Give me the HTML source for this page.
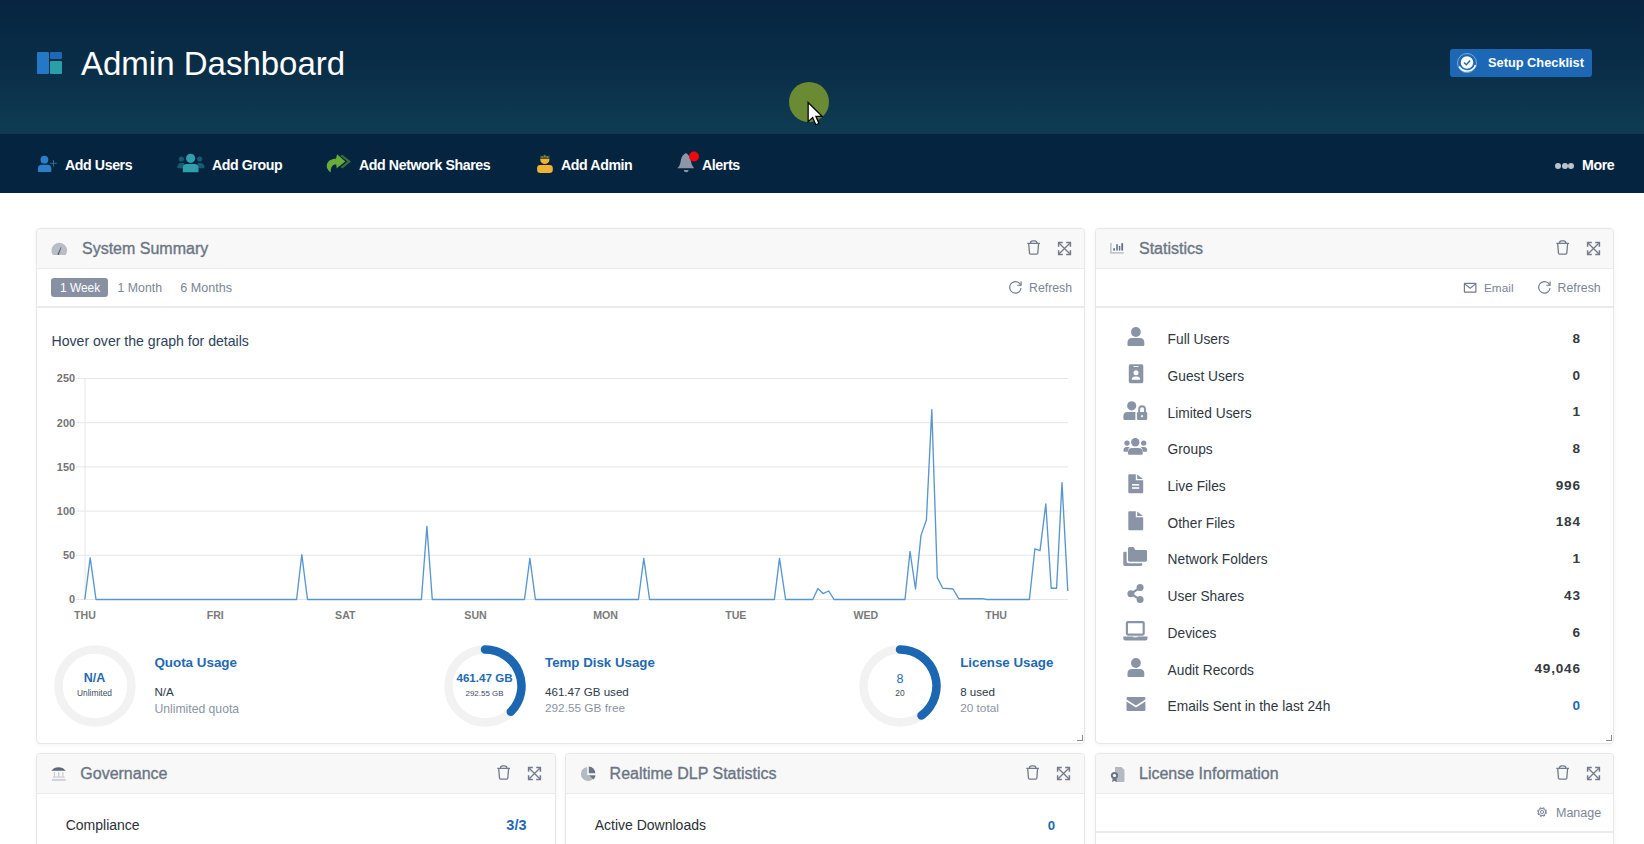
<!DOCTYPE html><html><head><meta charset="utf-8"><style>
*{margin:0;padding:0;box-sizing:border-box}
html,body{width:1644px;height:844px;overflow:hidden;background:#fff;font-family:"Liberation Sans",sans-serif}
.t{position:absolute;line-height:1;white-space:nowrap}
.abs{position:absolute}
.panel{position:absolute;background:#fff;border:1px solid #e6e6e6;border-radius:4px;box-shadow:0 1px 3px rgba(0,0,0,0.06);overflow:hidden}
.ph{position:absolute;left:0;right:0;top:0;height:40px;background:#f8f8f8;border-bottom:1px solid #e9e9e9}
.tb{position:absolute;left:0;right:0;top:40px;height:38px;border-bottom:2px solid #ececec}
</style></head><body>
<div class="abs" style="left:0;top:0;width:1644px;height:134px;background:linear-gradient(180deg,#072540 0%,#0a2e47 50%,#0e3c53 100%)"></div>
<div class="abs" style="left:0;top:134px;width:1644px;height:59px;background:#05243f"></div>
<div class="abs" style="left:37px;top:52px;width:12px;height:22px;background:#2379c6;border-radius:1px"></div>
<div class="abs" style="left:50px;top:52px;width:12px;height:7px;background:#1c69b5;border-radius:1px"></div>
<div class="abs" style="left:50px;top:61px;width:12px;height:13px;background:#2a9fa8;border-radius:1px"></div>
<div class="t" style="left:81px;top:46.97px;font-size:33px;color:#ffffff;font-weight:400;">Admin Dashboard</div>

<div class="abs" style="left:1450px;top:49px;width:142px;height:28px;background:#1d68b4;border-radius:3px"></div>
<svg class="abs" style="left:1456px;top:52px" width="22" height="22" viewBox="0 0 22 22">
<circle cx="11" cy="11" r="9.5" fill="none" stroke="#7fa9d6" stroke-width="1"/>
<path d="M3.2 14.5 A9 9 0 0 0 19.5 13" fill="none" stroke="#fff" stroke-width="1.6"/>
<circle cx="11" cy="10.5" r="6.2" fill="#fff"/>
<path d="M8 10.6 L10.3 12.8 L14.2 8.6" fill="none" stroke="#1d68b4" stroke-width="1.4"/>
</svg>
<div class="t" style="left:1488px;top:57.36px;font-size:12.8px;color:#ffffff;font-weight:700;">Setup Checklist</div>

<div class="abs" style="left:788.5px;top:81.5px;width:40.5px;height:40.5px;border-radius:50%;background:#6a8a33"></div>
<svg class="abs" style="left:806px;top:100.5px" width="20" height="26.5" viewBox="0 0 20 27">
<path d="M2 1.5 L2 21 L6.6 16.8 L9.8 24.2 L13 22.8 L9.9 15.6 L16.2 15.6 Z" fill="#fff" stroke="#000" stroke-width="1.3" stroke-linejoin="miter"/>
</svg>
<svg class="abs" style="left:37px;top:155px" width="21" height="18" viewBox="0 0 21 18">
<circle cx="7.4" cy="4.7" r="3.9" fill="#2a7fc8"/>
<path d="M0.9 13.7 Q0.9 9.7 4.9 9.7 L10.4 9.7 Q14.4 9.7 14.4 13.7 L14.4 16.2 Q14.4 17 13.6 17 L1.7 17 Q0.9 17 0.9 16.2Z" fill="#2a7fc8"/>
<path d="M16.5 5 V11.6 M13.2 8.3 H19.8" stroke="#2a6f95" stroke-width="1"/>
</svg>
<div class="t" style="left:65px;top:157.58px;font-size:14.2px;color:#fff;font-weight:700;letter-spacing:-0.42px;">Add Users</div>

<svg class="abs" style="left:177px;top:153px" width="28" height="20" viewBox="0 0 28 20">
<circle cx="4.4" cy="6" r="2.6" fill="#195a72"/><circle cx="22.7" cy="6" r="2.6" fill="#195a72"/>
<path d="M0.3 14.2 C0.3 11.5 1.8 10 4.6 10 L7.2 10 L7.2 15.3 L1 15.3 Q0.3 15.3 0.3 14.2Z" fill="#195a72"/>
<path d="M27.5 14.2 C27.5 11.5 26 10 23.2 10 L20.6 10 L20.6 15.3 L26.8 15.3 Q27.5 15.3 27.5 14.2Z" fill="#195a72"/>
<circle cx="13.6" cy="5.3" r="4.6" fill="#2f9fab"/>
<path d="M5.8 15 Q5.8 11 9.8 11 L17.5 11 Q21.5 11 21.5 15 L21.5 19.2 L5.8 19.2Z" fill="#2f9fab"/>
</svg>
<div class="t" style="left:212px;top:157.58px;font-size:14.2px;color:#fff;font-weight:700;letter-spacing:-0.42px;">Add Group</div>

<svg class="abs" style="left:325px;top:153px" width="27" height="21" viewBox="0 0 27 21">
<path d="M17 1.4 L26 8.5 L17.4 15.6 L15.6 14 L22.4 8.5 L15.3 3 Z" fill="#3b6a3c"/>
<path d="M12.1 1.2 L20.3 8.5 L11.7 15.3 L11.2 11.4 C7.8 11.2 5.6 13.5 5.7 19.6 C2.6 17.2 1.3 14.6 1.8 12 C2.6 7.6 6 5.8 11 5.7 Z" fill="#6aab3b"/>
</svg>
<div class="t" style="left:359px;top:157.58px;font-size:14.2px;color:#fff;font-weight:700;letter-spacing:-0.42px;">Add Network Shares</div>

<svg class="abs" style="left:536px;top:154px" width="18" height="20" viewBox="0 0 18 20">
<path d="M4.3 4.3 L4.3 1.2 L6.2 2.6 L8.8 0.5 L11.4 2.6 L13.4 1.2 L13.4 4.3Z" fill="#5d5a35"/>
<circle cx="6.2" cy="3" r="0.7" fill="#7fae3a"/><circle cx="8.8" cy="2.3" r="0.7" fill="#7fae3a"/><circle cx="11.4" cy="3" r="0.7" fill="#7fae3a"/>
<path d="M4.3 4.8 H13.4 V5.8 C13.4 8.4 11.4 10 8.85 10 C6.3 10 4.3 8.4 4.3 5.8Z" fill="#f0b232"/>
<rect x="1.1" y="11.1" width="15.7" height="7.8" rx="3.2" fill="#f0b232"/>
</svg>
<div class="t" style="left:561px;top:157.58px;font-size:14.2px;color:#fff;font-weight:700;letter-spacing:-0.42px;">Add Admin</div>

<svg class="abs" style="left:676px;top:151px" width="24" height="23" viewBox="0 0 24 23">
<path d="M9.9 2 C8.6 2.6 7.6 3.6 6.6 4.8 C5.2 6.6 4.9 9.5 4.2 12.5 C3.7 14.6 2.6 16.2 1.3 17.2 L18.2 17.2 C16.6 15.6 15.6 13.2 15 10.5 C14.4 7 12.2 3 9.9 2Z" fill="#8c96a6"/>
<path d="M7.8 18.9 H12.6 A2.4 2.4 0 0 1 7.8 18.9Z" fill="#8c96a6"/>
<circle cx="18" cy="5.5" r="5" fill="#ee0a0a"/>
</svg>
<div class="t" style="left:702px;top:157.58px;font-size:14.2px;color:#fff;font-weight:700;letter-spacing:-0.42px;">Alerts</div>

<div class="abs" style="left:1555px;top:163px;width:6px;height:6px;border-radius:50%;background:#bcc2cc"></div>
<div class="abs" style="left:1561.5px;top:163px;width:6px;height:6px;border-radius:50%;background:#bcc2cc"></div>
<div class="abs" style="left:1568px;top:163px;width:6px;height:6px;border-radius:50%;background:#bcc2cc"></div>
<div class="t" style="left:1582px;top:157.58px;font-size:14.2px;color:#fff;font-weight:700;letter-spacing:-0.42px;">More</div>

<div class="abs" style="left:36px;top:228px;width:1049px;height:516px;border:1px solid #e7e7e7;border-radius:4px;background:#fff;box-shadow:0 1px 4px rgba(0,0,0,0.05);overflow:hidden"><div class="abs" style="left:0;top:0;right:0;height:40px;background:#f8f8f8;border-bottom:1px solid #ebebeb"></div></div>

<div class="abs" style="left:1095px;top:228px;width:519px;height:516px;border:1px solid #e7e7e7;border-radius:4px;background:#fff;box-shadow:0 1px 4px rgba(0,0,0,0.05);overflow:hidden"><div class="abs" style="left:0;top:0;right:0;height:40px;background:#f8f8f8;border-bottom:1px solid #ebebeb"></div></div>

<div class="abs" style="left:36px;top:753px;width:520px;height:147px;border:1px solid #e7e7e7;border-radius:4px;background:#fff;box-shadow:0 1px 4px rgba(0,0,0,0.05);overflow:hidden"><div class="abs" style="left:0;top:0;right:0;height:40px;background:#f8f8f8;border-bottom:1px solid #ebebeb"></div></div>

<div class="abs" style="left:565px;top:753px;width:520px;height:147px;border:1px solid #e7e7e7;border-radius:4px;background:#fff;box-shadow:0 1px 4px rgba(0,0,0,0.05);overflow:hidden"><div class="abs" style="left:0;top:0;right:0;height:40px;background:#f8f8f8;border-bottom:1px solid #ebebeb"></div></div>

<div class="abs" style="left:1095px;top:753px;width:519px;height:147px;border:1px solid #e7e7e7;border-radius:4px;background:#fff;box-shadow:0 1px 4px rgba(0,0,0,0.05);overflow:hidden"><div class="abs" style="left:0;top:0;right:0;height:40px;background:#f8f8f8;border-bottom:1px solid #ebebeb"></div></div>

<div class="abs" style="left:37px;top:306px;width:1047px;height:1.5px;background:#ebebeb"></div>
<div class="abs" style="left:1096px;top:306px;width:517px;height:1.5px;background:#ebebeb"></div>
<div class="abs" style="left:1096px;top:831px;width:517px;height:1.5px;background:#ebebeb"></div>
<svg class="abs" style="left:51px;top:242px" width="17" height="14" viewBox="0 0 17 14">
<path d="M1.9 13 A7.8 7.8 0 1 1 14.6 13 Z" fill="#b9bec6"/>
<path d="M6.4 12.6 L7.7 12.9 L10.4 5.2 L9.9 5 Z" fill="#4b5563"/>
</svg>
<div class="t" style="left:82px;top:240.66px;font-size:16.0px;color:#6b7585;font-weight:400;-webkit-text-stroke:0.35px #6b7585;">System Summary</div>

<svg class="abs" style="left:1027px;top:240px" width="14" height="15" viewBox="0 0 14 15">
<path d="M0.3 3.4 H13 M3.4 3.2 Q3.4 0.9 5.8 0.9 H7.5 Q9.9 0.9 9.9 3.2 M1.7 3.6 L2.5 13.3 Q2.6 14.2 3.5 14.2 H9.8 Q10.7 14.2 10.8 13.3 L11.6 3.6" fill="none" stroke="#727b8a" stroke-width="1.3"/>
</svg>
<svg class="abs" style="left:1057px;top:240.5px" width="15" height="15" viewBox="0 0 15 15">
<path d="M2.2 2.2 L12.8 12.8 M12.8 2.2 L2.2 12.8" stroke="#727b8a" stroke-width="1.3"/>
<path d="M1.6 5.8 V1.6 H5.8 M9.2 1.6 H13.4 V5.8 M13.4 9.2 V13.4 H9.2 M5.8 13.4 H1.6 V9.2" fill="none" stroke="#727b8a" stroke-width="1.5"/>
</svg>
<div class="abs" style="left:51px;top:278px;width:57px;height:19px;background:#8891a4;border-radius:3px"></div>
<div class="t" style="left:60px;top:282.53px;font-size:11.9px;color:#fff;font-weight:400;">1 Week</div>

<div class="t" style="left:117.6px;top:282.39px;font-size:12.3px;color:#7c8594;font-weight:400;">1 Month</div>

<div class="t" style="left:180.3px;top:282.13px;font-size:12.6px;color:#7c8594;font-weight:400;">6 Months</div>

<svg class="abs" style="left:1008.5px;top:281px" width="13.5" height="13" viewBox="3 3 19 18.3">
<path d="M19.933 13.041a8 8 0 1 1 -9.925 -8.788c3.899 -1 7.935 1.007 9.425 4.747" fill="none" stroke="#727b8a" stroke-width="1.7"/>
<path d="M20 3.6v5.4h-5.4" fill="none" stroke="#727b8a" stroke-width="1.7"/>
</svg>
<div class="t" style="left:1029px;top:282.39px;font-size:12.3px;color:#7c8594;font-weight:400;">Refresh</div>

<div class="t" style="left:51.5px;top:333.96px;font-size:14.1px;color:#2d425a;font-weight:400;">Hover over the graph for details</div>

<svg class="abs" style="left:0;top:0" width="1644" height="844"><line x1="76" y1="599.5" x2="1068" y2="599.5" stroke="#e6e6e6" stroke-width="1"/><text x="75" y="603.3" text-anchor="end" font-size="10.9" fill="#747474" font-family="Liberation Sans" font-weight="700">0</text><line x1="76" y1="555.3" x2="1068" y2="555.3" stroke="#e6e6e6" stroke-width="1"/><text x="75" y="559.1" text-anchor="end" font-size="10.9" fill="#747474" font-family="Liberation Sans" font-weight="700">50</text><line x1="76" y1="511.1" x2="1068" y2="511.1" stroke="#e6e6e6" stroke-width="1"/><text x="75" y="514.9" text-anchor="end" font-size="10.9" fill="#747474" font-family="Liberation Sans" font-weight="700">100</text><line x1="76" y1="466.9" x2="1068" y2="466.9" stroke="#e6e6e6" stroke-width="1"/><text x="75" y="470.7" text-anchor="end" font-size="10.9" fill="#747474" font-family="Liberation Sans" font-weight="700">150</text><line x1="76" y1="422.7" x2="1068" y2="422.7" stroke="#e6e6e6" stroke-width="1"/><text x="75" y="426.5" text-anchor="end" font-size="10.9" fill="#747474" font-family="Liberation Sans" font-weight="700">200</text><line x1="76" y1="378.5" x2="1068" y2="378.5" stroke="#e6e6e6" stroke-width="1"/><text x="75" y="382.3" text-anchor="end" font-size="10.9" fill="#747474" font-family="Liberation Sans" font-weight="700">250</text><line x1="85" y1="378" x2="85" y2="600" stroke="#e6e6e6" stroke-width="1"/><text x="85.0" y="619.2" text-anchor="middle" font-size="10.6" fill="#7a7a7a" font-family="Liberation Sans" font-weight="700">THU</text><text x="215.2" y="619.2" text-anchor="middle" font-size="10.6" fill="#7a7a7a" font-family="Liberation Sans" font-weight="700">FRI</text><text x="345.3" y="619.2" text-anchor="middle" font-size="10.6" fill="#7a7a7a" font-family="Liberation Sans" font-weight="700">SAT</text><text x="475.5" y="619.2" text-anchor="middle" font-size="10.6" fill="#7a7a7a" font-family="Liberation Sans" font-weight="700">SUN</text><text x="605.6" y="619.2" text-anchor="middle" font-size="10.6" fill="#7a7a7a" font-family="Liberation Sans" font-weight="700">MON</text><text x="735.8" y="619.2" text-anchor="middle" font-size="10.6" fill="#7a7a7a" font-family="Liberation Sans" font-weight="700">TUE</text><text x="865.9" y="619.2" text-anchor="middle" font-size="10.6" fill="#7a7a7a" font-family="Liberation Sans" font-weight="700">WED</text><text x="996.1" y="619.2" text-anchor="middle" font-size="10.6" fill="#7a7a7a" font-family="Liberation Sans" font-weight="700">THU</text><path d="M84.8 599.5 L90.2 557.8 L96.0 599.5 L296.6 599.5 L301.8 554.6 L307.5 599.5 L421.4 599.5 L426.9 526.4 L432.3 599.5 L524.5 599.5 L529.9 558.4 L535.4 599.5 L638.4 599.5 L643.8 558.4 L649.6 599.5 L774.4 599.5 L779.5 558.4 L785.6 599.5 L812.8 599.5 L817.9 588.5 L823.0 593.6 L828.8 591.0 L834.0 599.5 L905.0 599.5 L910.0 551.4 L915.5 589.0 L921.0 535.4 L926.4 520.0 L931.8 409.6 L937.3 577.6 L942.7 588.2 L953.0 589.0 L958.7 598.7 L982.4 598.7 L987.0 599.5 L1029.4 599.5 L1034.9 548.8 L1040.0 550.7 L1045.8 504.0 L1051.2 588.2 L1056.6 588.2 L1062.0 482.6 L1067.8 591.0" fill="none" stroke="#5896d0" stroke-width="1.35" stroke-linejoin="round"/></svg>
<svg class="abs" style="left:49.5px;top:641px" width="90" height="90" viewBox="0 0 90 90"><circle cx="45" cy="45" r="36.5" fill="none" stroke="#f2f2f2" stroke-width="8.5"/></svg>
<div class="t" style="left:94.5px;transform:translateX(-50%);top:672.42px;font-size:12.5px;color:#1f6ab3;font-weight:700;">N/A</div>

<div class="t" style="left:94.5px;transform:translateX(-50%);top:689.49px;font-size:8.4px;color:#3c4b5d;font-weight:400;">Unlimited</div>

<div class="t" style="left:154.4px;top:656.46px;font-size:13.4px;color:#1f6ab3;font-weight:700;">Quota Usage</div>

<div class="t" style="left:154.4px;top:686.18px;font-size:11.6px;color:#2c3a4b;font-weight:400;">N/A</div>

<div class="t" style="left:154.4px;top:702.67px;font-size:12.2px;color:#8a94a6;font-weight:400;">Unlimited quota</div>

<svg class="abs" style="left:439.5px;top:640.5px" width="90" height="90" viewBox="0 0 90 90"><circle cx="45" cy="45" r="36.5" fill="none" stroke="#f2f2f2" stroke-width="8.5"/><path d="M45 8.5 A36.5 36.5 0 0 1 70.81 70.81" fill="none" stroke="#1c67b2" stroke-width="8.5" stroke-linecap="round"/></svg>
<div class="t" style="left:484.5px;transform:translateX(-50%);top:672.38px;font-size:11.6px;color:#1f6ab3;font-weight:700;">461.47 GB</div>

<div class="t" style="left:484.5px;transform:translateX(-50%);top:690.27px;font-size:7.95px;color:#3c4b5d;font-weight:400;">292.55 GB</div>

<div class="t" style="left:545px;top:655.74px;font-size:13.3px;color:#1f6ab3;font-weight:700;">Temp Disk Usage</div>

<div class="t" style="left:545px;top:685.88px;font-size:11.6px;color:#2c3a4b;font-weight:400;">461.47 GB used</div>

<div class="t" style="left:545px;top:703.31px;font-size:11.8px;color:#8a94a6;font-weight:400;">292.55 GB free</div>

<svg class="abs" style="left:855px;top:640.5px" width="90" height="90" viewBox="0 0 90 90"><circle cx="45" cy="45" r="36.5" fill="none" stroke="#f2f2f2" stroke-width="8.5"/><path d="M45 8.5 A36.5 36.5 0 0 1 66.45 74.53" fill="none" stroke="#1c67b2" stroke-width="8.5" stroke-linecap="round"/></svg>
<div class="t" style="left:900px;transform:translateX(-50%);top:673.12px;font-size:12.5px;color:#1f6ab3;font-weight:400;">8</div>

<div class="t" style="left:900px;transform:translateX(-50%);top:689.49px;font-size:8.4px;color:#3c4b5d;font-weight:400;">20</div>

<div class="t" style="left:960.2px;top:655.74px;font-size:13.3px;color:#1f6ab3;font-weight:700;">License Usage</div>

<div class="t" style="left:960.2px;top:685.88px;font-size:11.6px;color:#2c3a4b;font-weight:400;">8 used</div>

<div class="t" style="left:960.2px;top:703.31px;font-size:11.8px;color:#8a94a6;font-weight:400;">20 total</div>

<div class="abs" style="left:1077px;top:735px;width:6px;height:6px;border-right:1px solid #8a8a8a;border-bottom:1px solid #8a8a8a"></div>
<div class="abs" style="left:1606px;top:735px;width:6px;height:6px;border-right:1px solid #8a8a8a;border-bottom:1px solid #8a8a8a"></div>
<svg class="abs" style="left:1110px;top:243px" width="15" height="12" viewBox="0 0 15 12">
<path d="M0 0 H1.8 V9.1 H13.8 V10.8 H0 Z" fill="#c3c8cf"/>
<rect x="3.3" y="4.9" width="1.7" height="2.9" rx="0.8" fill="#66707f"/><rect x="6.1" y="1.1" width="1.9" height="6.7" rx="0.8" fill="#7c8698"/>
<rect x="8.9" y="2.8" width="1.4" height="5" rx="0.7" fill="#66707f"/><rect x="11.3" y="0" width="1.8" height="7.8" rx="0.8" fill="#66707f"/>
</svg>
<div class="t" style="left:1139px;top:240.66px;font-size:16.0px;color:#6b7585;font-weight:400;-webkit-text-stroke:0.35px #6b7585;">Statistics</div>

<svg class="abs" style="left:1556px;top:240px" width="14" height="15" viewBox="0 0 14 15">
<path d="M0.3 3.4 H13 M3.4 3.2 Q3.4 0.9 5.8 0.9 H7.5 Q9.9 0.9 9.9 3.2 M1.7 3.6 L2.5 13.3 Q2.6 14.2 3.5 14.2 H9.8 Q10.7 14.2 10.8 13.3 L11.6 3.6" fill="none" stroke="#727b8a" stroke-width="1.3"/>
</svg>
<svg class="abs" style="left:1586px;top:240.5px" width="15" height="15" viewBox="0 0 15 15">
<path d="M2.2 2.2 L12.8 12.8 M12.8 2.2 L2.2 12.8" stroke="#727b8a" stroke-width="1.3"/>
<path d="M1.6 5.8 V1.6 H5.8 M9.2 1.6 H13.4 V5.8 M13.4 9.2 V13.4 H9.2 M5.8 13.4 H1.6 V9.2" fill="none" stroke="#727b8a" stroke-width="1.5"/>
</svg>
<svg class="abs" style="left:1463px;top:282px" width="14" height="12" viewBox="0 0 14 12">
<rect x="1.4" y="1.4" width="11.5" height="8.8" rx="0.4" fill="none" stroke="#727b8a" stroke-width="1.2"/>
<path d="M1.6 1.9 L7.15 6.2 L12.7 1.9" fill="none" stroke="#727b8a" stroke-width="1.2"/>
</svg>
<div class="t" style="left:1484px;top:282.81px;font-size:11.8px;color:#7c8594;font-weight:400;">Email</div>

<svg class="abs" style="left:1537.5px;top:281px" width="13.5" height="13" viewBox="3 3 19 18.3">
<path d="M19.933 13.041a8 8 0 1 1 -9.925 -8.788c3.899 -1 7.935 1.007 9.425 4.747" fill="none" stroke="#727b8a" stroke-width="1.7"/>
<path d="M20 3.6v5.4h-5.4" fill="none" stroke="#727b8a" stroke-width="1.7"/>
</svg>
<div class="t" style="left:1557.6px;top:282.39px;font-size:12.3px;color:#7c8594;font-weight:400;">Refresh</div>

<svg class="abs" style="left:1126.5px;top:327px" width="18" height="19" viewBox="0 0 18 19"><circle cx="8.9" cy="5" r="4.9" fill="#8a94a7"/><path d="M0.5 15.4 Q0.5 10.9 5 10.9 L12.8 10.9 Q17.3 10.9 17.3 15.4 L17.3 17.9 Q17.3 19 16.2 19 L1.6 19 Q0.5 19 0.5 17.9Z" fill="#8a94a7"/></svg>
<div class="t" style="left:1167.6px;top:333.26px;font-size:13.75px;color:#2f3742;font-weight:400;">Full Users</div>

<div class="t" style="right:63.200000000000045px;top:331.99px;font-size:13.6px;color:#363a41;font-weight:700;letter-spacing:0.8px;">8</div>

<svg class="abs" style="left:1126.5px;top:364px" width="18" height="20" viewBox="0 0 18 20"><rect x="1.8" y="0.2" width="14.5" height="19" rx="1.8" fill="#8a94a7"/><rect x="6.5" y="2" width="5" height="1" fill="#fff"/><circle cx="9" cy="8.8" r="2.5" fill="#fff"/><path d="M4.8 15.8 C4.8 13 6.5 12.4 9 12.4 C11.5 12.4 13.2 13 13.2 15.8Z" fill="#fff"/></svg>
<div class="t" style="left:1167.6px;top:369.96px;font-size:13.75px;color:#2f3742;font-weight:400;">Guest Users</div>

<div class="t" style="right:63.200000000000045px;top:368.69px;font-size:13.6px;color:#363a41;font-weight:700;letter-spacing:0.8px;">0</div>

<svg class="abs" style="left:1123px;top:401px" width="25" height="20" viewBox="0 0 25 20"><circle cx="8.7" cy="4.8" r="4.6" fill="#8a94a7"/><path d="M0.4 15.2 Q0.4 11 4.6 11 L12.4 11 L12.4 19 L1.6 19 Q0.4 19 0.4 17.8Z" fill="#8a94a7"/><path d="M16.2 11 V8.1 A2.9 2.9 0 0 1 22 8.1 V11" fill="none" stroke="#8a94a7" stroke-width="1.9"/><rect x="13.9" y="11" width="10.3" height="8" rx="1.2" fill="#8a94a7"/><rect x="18.2" y="14.2" width="1.8" height="2" fill="#fff"/></svg>
<div class="t" style="left:1167.6px;top:406.66px;font-size:13.75px;color:#2f3742;font-weight:400;">Limited Users</div>

<div class="t" style="right:63.200000000000045px;top:405.39px;font-size:13.6px;color:#363a41;font-weight:700;letter-spacing:0.8px;">1</div>

<svg class="abs" style="left:1123px;top:437px" width="25" height="18" viewBox="0 0 25 18"><circle cx="12.3" cy="5.3" r="4.2" fill="#8a94a7"/><path d="M5 15 Q5 11.1 9 11.1 L15.7 11.1 Q19.7 11.1 19.7 15 L19.7 16.8 Q19.7 17.8 18.7 17.8 L6 17.8 Q5 17.8 5 16.8Z" fill="#8a94a7"/><circle cx="4" cy="6.1" r="2.7" fill="#8a94a7"/><circle cx="20.7" cy="6.1" r="2.7" fill="#8a94a7"/><path d="M0.4 13.5 Q0.4 9.9 3.5 9.9 L6.6 9.9 Q5 11.5 4.7 14.8 L1.5 14.8 Q0.4 14.8 0.4 13.5Z" fill="#8a94a7"/><path d="M24.2 13.5 Q24.2 9.9 21.1 9.9 L18 9.9 Q19.6 11.5 19.9 14.8 L23.1 14.8 Q24.2 14.8 24.2 13.5Z" fill="#8a94a7"/></svg>
<div class="t" style="left:1167.6px;top:443.36px;font-size:13.75px;color:#2f3742;font-weight:400;">Groups</div>

<div class="t" style="right:63.200000000000045px;top:442.09px;font-size:13.6px;color:#363a41;font-weight:700;letter-spacing:0.8px;">8</div>

<svg class="abs" style="left:1124px;top:474px" width="20" height="20" viewBox="0 0 20 20"><path d="M4.3 1.3 Q4.3 0.3 5.3 0.3 H11.8 V6.2 H19.2 V18.3 Q19.2 19.3 18.2 19.3 H5.3 Q4.3 19.3 4.3 18.3Z" fill="#8a94a7"/><path d="M13.2 0.4 L19 5 H13.2Z" fill="#8a94a7"/><rect x="8" y="10" width="7.2" height="1.6" fill="#fff"/><rect x="8" y="13.2" width="7.2" height="1.6" fill="#fff"/></svg>
<div class="t" style="left:1167.6px;top:480.06px;font-size:13.75px;color:#2f3742;font-weight:400;">Live Files</div>

<div class="t" style="right:63.200000000000045px;top:478.79px;font-size:13.6px;color:#363a41;font-weight:700;letter-spacing:0.8px;">996</div>

<svg class="abs" style="left:1124px;top:511px" width="20" height="20" viewBox="0 0 20 20"><path d="M4.3 1.3 Q4.3 0.3 5.3 0.3 H11.8 V6.2 H19.2 V18.3 Q19.2 19.3 18.2 19.3 H5.3 Q4.3 19.3 4.3 18.3Z" fill="#8a94a7"/><path d="M13.2 0.4 L19 5 H13.2Z" fill="#8a94a7"/></svg>
<div class="t" style="left:1167.6px;top:516.76px;font-size:13.75px;color:#2f3742;font-weight:400;">Other Files</div>

<div class="t" style="right:63.200000000000045px;top:515.49px;font-size:13.6px;color:#363a41;font-weight:700;letter-spacing:0.8px;">184</div>

<svg class="abs" style="left:1123px;top:546px" width="25" height="21" viewBox="0 0 25 21"><path d="M5 2.4 Q5 0.9 6.5 0.9 H10.5 L12.5 3.9 H22.6 Q24 3.9 24 5.3 V14.3 Q24 15.7 22.6 15.7 H6.4 Q5 15.7 5 14.3Z" fill="#8a94a7"/><path d="M0.3 7 Q0.3 5.7 1.6 5.7 H3.6 V15.5 Q3.6 17.3 5.4 17.3 H19.3 V18.6 Q19.3 19.9 18 19.9 H1.6 Q0.3 19.9 0.3 18.6Z" fill="#8a94a7"/></svg>
<div class="t" style="left:1167.6px;top:553.46px;font-size:13.75px;color:#2f3742;font-weight:400;">Network Folders</div>

<div class="t" style="right:63.200000000000045px;top:552.19px;font-size:13.6px;color:#363a41;font-weight:700;letter-spacing:0.8px;">1</div>

<svg class="abs" style="left:1126.5px;top:584px" width="18" height="20" viewBox="0 0 18 20"><circle cx="13.1" cy="3.6" r="3.5" fill="#8a94a7"/><circle cx="3.9" cy="9.8" r="3.5" fill="#8a94a7"/><circle cx="13.1" cy="15.6" r="3.5" fill="#8a94a7"/><path d="M13.1 3.6 L3.9 9.8 L13.1 15.6" fill="none" stroke="#8a94a7" stroke-width="2.2"/></svg>
<div class="t" style="left:1167.6px;top:590.16px;font-size:13.75px;color:#2f3742;font-weight:400;">User Shares</div>

<div class="t" style="right:63.200000000000045px;top:588.89px;font-size:13.6px;color:#363a41;font-weight:700;letter-spacing:0.8px;">43</div>

<svg class="abs" style="left:1123px;top:621px" width="25" height="20" viewBox="0 0 25 20"><rect x="3.9" y="1.2" width="16.8" height="12.4" rx="1" fill="none" stroke="#8a94a7" stroke-width="2.2"/><path d="M0.3 15.4 H24.5 V17.6 Q24.5 19.6 22.5 19.6 H2.3 Q0.3 19.6 0.3 17.6Z" fill="#8a94a7"/><rect x="10.2" y="15.4" width="4.4" height="0.9" fill="#fff"/></svg>
<div class="t" style="left:1167.6px;top:626.86px;font-size:13.75px;color:#2f3742;font-weight:400;">Devices</div>

<div class="t" style="right:63.200000000000045px;top:625.59px;font-size:13.6px;color:#363a41;font-weight:700;letter-spacing:0.8px;">6</div>

<svg class="abs" style="left:1126.5px;top:658px" width="18" height="19" viewBox="0 0 18 19"><circle cx="8.9" cy="5" r="4.9" fill="#8a94a7"/><path d="M0.5 15.4 Q0.5 10.9 5 10.9 L12.8 10.9 Q17.3 10.9 17.3 15.4 L17.3 17.9 Q17.3 19 16.2 19 L1.6 19 Q0.5 19 0.5 17.9Z" fill="#8a94a7"/></svg>
<div class="t" style="left:1167.6px;top:663.56px;font-size:13.75px;color:#2f3742;font-weight:400;">Audit Records</div>

<div class="t" style="right:63.200000000000045px;top:662.29px;font-size:13.6px;color:#363a41;font-weight:700;letter-spacing:0.8px;">49,046</div>

<svg class="abs" style="left:1125.5px;top:696.5px" width="20" height="15" viewBox="0 0 20 15"><path d="M0.5 1.4 Q0.5 0.1 1.8 0.1 H18.1 Q19.4 0.1 19.4 1.4 V2.4 L9.95 8.4 L0.5 2.4Z" fill="#8a94a7"/><path d="M0.5 4.6 L9.95 10.6 L19.4 4.6 V12.8 Q19.4 14.1 18.1 14.1 H1.8 Q0.5 14.1 0.5 12.8Z" fill="#8a94a7"/></svg>
<div class="t" style="left:1167.6px;top:700.26px;font-size:13.75px;color:#2f3742;font-weight:400;">Emails Sent in the last 24h</div>

<div class="t" style="right:63.200000000000045px;top:698.99px;font-size:13.6px;color:#1f6ab3;font-weight:700;letter-spacing:0.8px;">0</div>

<svg class="abs" style="left:51px;top:766px" width="16" height="16" viewBox="0 0 16 16">
<path d="M0.2 4.8 L3 2.2 Q7.5 0.2 12 2.2 L14.8 4.8 Z" fill="#5f6878"/>
<rect x="2.8" y="6" width="1.2" height="5" fill="#c9cdd3"/><rect x="7" y="6" width="1.3" height="5" fill="#c9cdd3"/><rect x="11.3" y="6" width="1.2" height="5" fill="#c9cdd3"/>
<rect x="1.9" y="10.5" width="11.7" height="1.2" fill="#c9cdd3"/>
<rect x="1" y="13.1" width="13.8" height="1.7" fill="#c9cdd3"/>
</svg>
<div class="t" style="left:80.3px;top:765.56px;font-size:16.0px;color:#6b7585;font-weight:400;-webkit-text-stroke:0.35px #6b7585;">Governance</div>

<svg class="abs" style="left:497px;top:765px" width="14" height="15" viewBox="0 0 14 15">
<path d="M0.3 3.4 H13 M3.4 3.2 Q3.4 0.9 5.8 0.9 H7.5 Q9.9 0.9 9.9 3.2 M1.7 3.6 L2.5 13.3 Q2.6 14.2 3.5 14.2 H9.8 Q10.7 14.2 10.8 13.3 L11.6 3.6" fill="none" stroke="#727b8a" stroke-width="1.3"/>
</svg>
<svg class="abs" style="left:527px;top:765.5px" width="15" height="15" viewBox="0 0 15 15">
<path d="M2.2 2.2 L12.8 12.8 M12.8 2.2 L2.2 12.8" stroke="#727b8a" stroke-width="1.3"/>
<path d="M1.6 5.8 V1.6 H5.8 M9.2 1.6 H13.4 V5.8 M13.4 9.2 V13.4 H9.2 M5.8 13.4 H1.6 V9.2" fill="none" stroke="#727b8a" stroke-width="1.5"/>
</svg>
<div class="t" style="left:65.7px;top:818.15px;font-size:14px;color:#2b2f36;font-weight:400;">Compliance</div>

<div class="t" style="right:1117.5px;top:817.73px;font-size:14.5px;color:#1f6ab3;font-weight:700;">3/3</div>

<svg class="abs" style="left:580px;top:766px" width="17" height="16" viewBox="0 0 17 16">
<path d="M7.2 1 A7 7 0 1 0 14.8 9 L7.2 9Z" fill="#b4bac3"/>
<path d="M8.8 0.5 A7 7 0 0 1 15.3 7.2 L8.8 7.2Z" fill="#6b7482"/>
<path d="M9.5 9.6 L15.6 9.6 A7 7 0 0 1 13.3 13.6Z" fill="#6b7482"/>
</svg>
<div class="t" style="left:609.6px;top:765.56px;font-size:16.0px;color:#6b7585;font-weight:400;-webkit-text-stroke:0.35px #6b7585;">Realtime DLP Statistics</div>

<svg class="abs" style="left:1026px;top:765px" width="14" height="15" viewBox="0 0 14 15">
<path d="M0.3 3.4 H13 M3.4 3.2 Q3.4 0.9 5.8 0.9 H7.5 Q9.9 0.9 9.9 3.2 M1.7 3.6 L2.5 13.3 Q2.6 14.2 3.5 14.2 H9.8 Q10.7 14.2 10.8 13.3 L11.6 3.6" fill="none" stroke="#727b8a" stroke-width="1.3"/>
</svg>
<svg class="abs" style="left:1056px;top:765.5px" width="15" height="15" viewBox="0 0 15 15">
<path d="M2.2 2.2 L12.8 12.8 M12.8 2.2 L2.2 12.8" stroke="#727b8a" stroke-width="1.3"/>
<path d="M1.6 5.8 V1.6 H5.8 M9.2 1.6 H13.4 V5.8 M13.4 9.2 V13.4 H9.2 M5.8 13.4 H1.6 V9.2" fill="none" stroke="#727b8a" stroke-width="1.5"/>
</svg>
<div class="t" style="left:594.7px;top:818.15px;font-size:14px;color:#2b2f36;font-weight:400;">Active Downloads</div>

<div class="t" style="right:589px;top:818.83px;font-size:13.2px;color:#1f6ab3;font-weight:700;">0</div>

<svg class="abs" style="left:1109px;top:766px" width="17" height="17" viewBox="0 0 17 17">
<path d="M6 1 H12.5 L15.5 4 V15 Q15.5 16 14.5 16 H7 Q6 16 6 15Z" fill="#b4bac3"/>
<circle cx="5.5" cy="9.5" r="3.6" fill="#6b7482"/><circle cx="5.5" cy="9.5" r="1.6" fill="#fff"/>
<path d="M3.8 12.2 L3 16 L5.5 14.8 L8 16 L7.2 12.2Z" fill="#6b7482"/>
</svg>
<div class="t" style="left:1139px;top:765.56px;font-size:16.0px;color:#6b7585;font-weight:400;-webkit-text-stroke:0.35px #6b7585;">License Information</div>

<svg class="abs" style="left:1556px;top:765px" width="14" height="15" viewBox="0 0 14 15">
<path d="M0.3 3.4 H13 M3.4 3.2 Q3.4 0.9 5.8 0.9 H7.5 Q9.9 0.9 9.9 3.2 M1.7 3.6 L2.5 13.3 Q2.6 14.2 3.5 14.2 H9.8 Q10.7 14.2 10.8 13.3 L11.6 3.6" fill="none" stroke="#727b8a" stroke-width="1.3"/>
</svg>
<svg class="abs" style="left:1586px;top:765.5px" width="15" height="15" viewBox="0 0 15 15">
<path d="M2.2 2.2 L12.8 12.8 M12.8 2.2 L2.2 12.8" stroke="#727b8a" stroke-width="1.3"/>
<path d="M1.6 5.8 V1.6 H5.8 M9.2 1.6 H13.4 V5.8 M13.4 9.2 V13.4 H9.2 M5.8 13.4 H1.6 V9.2" fill="none" stroke="#727b8a" stroke-width="1.5"/>
</svg>
<svg class="abs" style="left:1536px;top:806px" width="12" height="12" viewBox="0 0 12 12">
<circle cx="6" cy="6" r="4.3" fill="none" stroke="#7c8594" stroke-width="1.1" stroke-dasharray="2 1.4"/>
<circle cx="6" cy="6" r="3.6" fill="none" stroke="#7c8594" stroke-width="1"/>
<circle cx="6" cy="6" r="1.6" fill="none" stroke="#7c8594" stroke-width="1"/>
</svg>
<div class="t" style="left:1556px;top:807.22px;font-size:12.5px;color:#7c8594;font-weight:400;">Manage</div>

</body></html>
